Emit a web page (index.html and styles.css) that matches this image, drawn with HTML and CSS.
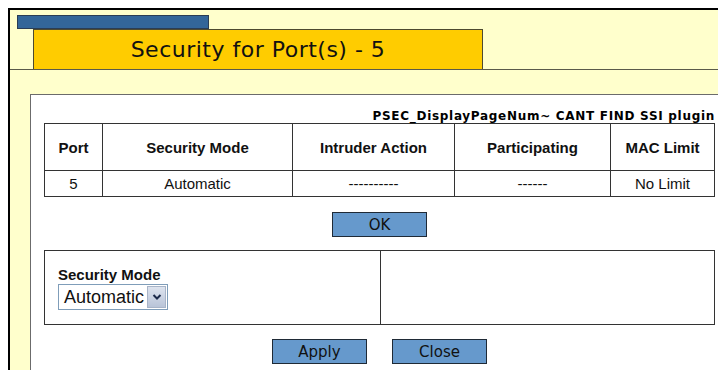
FILE: index.html
```html
<!DOCTYPE html>
<html lang="en">
<head>
    <meta charset="UTF-8">
    <meta name="viewport" content="width=device-width, initial-scale=1.0">
    <title>Port Security</title>
    <link rel="stylesheet" href="styles.css">
</head>
<body>
<div class="frame">
    <!-- tab strip + title -->
    <div class="tab-strip"></div>
    <div class="title-row">
        <h1 class="title">Security for Port(s) - 5</h1>
    </div>

    <div class="panel">
        <div class="page-note">PSEC_DisplayPageNum~ CANT FIND SSI plugin</div>
        <table class="ports">
            <thead>
                <tr>
                    <th class="col-port">Port</th>
                    <th class="col-mode">Security Mode</th>
                    <th class="col-intruder">Intruder Action</th>
                    <th class="col-part">Participating</th>
                    <th>MAC Limit</th>
                </tr>
            </thead>
            <tbody>
                <tr>
                    <td>5</td>
                    <td>Automatic</td>
                    <td>----------</td>
                    <td>------</td>
                    <td>No Limit</td>
                </tr>
            </tbody>
        </table>

        <div class="actions ok-row">
            <button class="btn" type="button">OK</button>
        </div>

        <table class="settings">
            <tr>
                <td class="setting-cell">
                    <label class="setting-label">Security Mode</label>
                    <div class="select">
                        <span class="select-value">Automatic</span>
                        <span class="select-arrow">
                            <svg width="10" height="8" viewBox="0 0 10 8"><path d="M1.5 2 L5 5.5 L8.5 2" fill="none" stroke="#1c2a4a" stroke-width="2"/></svg>
                        </span>
                    </div>
                </td>
                <td class="setting-empty"></td>
            </tr>
        </table>

        <div class="actions bottom-row">
            <button class="btn" type="button">Apply</button>
            <button class="btn" type="button">Close</button>
        </div>
    </div>
</div>
</body>
</html>
```

FILE: styles.css
```css
html, body {
    overflow: hidden;
}

body {
    margin: 8px;
    background: #fff;
    font-family: "Liberation Sans", Arial, sans-serif;
}

.frame {
    width: 760px;
    min-height: 420px;
    border-top: 2px solid #000;
    border-left: 2px solid #000;
    background-color: #ffffcc;
}

.tab-strip {
    margin: 5px 0 0 7px;
    width: 190px;
    height: 12px;
    background-color: #336699;
    border: 1px solid #2a3d55;
}

.title-row {
    border-bottom: 1px solid #5a5a4a;
}

.title {
    margin: 0 0 0 23px;
    width: 448px;
    height: 39px;
    line-height: 39px;
    background-color: #ffcc00;
    border: 1px solid #4d4a30;
    border-bottom: none;
    font-family: "DejaVu Sans", Verdana, sans-serif;
    font-weight: normal;
    font-size: 22px;
    letter-spacing: 0.5px;
    text-align: center;
    color: #111;
}

.panel {
    margin: 24px 0 0 20px;
    width: 697px;
    min-height: 300px;
    padding: 0 13px;
    background: #fff;
    border: 1px solid #6b6b6b;
}

.page-note {
    width: 671px;
    padding-top: 14px;
    height: 14px;
    line-height: 14px;
    text-align: right;
    font-family: "DejaVu Sans", Verdana, sans-serif;
    font-weight: bold;
    font-size: 12px;
    letter-spacing: 0.7px;
    color: #000;
    white-space: nowrap;
}

table {
    border-collapse: collapse;
    width: 671px;
    table-layout: fixed;
}

.ports th, .ports td {
    border: 1px solid #333;
    text-align: center;
    padding: 0;
    color: #111;
}

.ports th {
    height: 46px;
    font-size: 15px;
    font-weight: bold;
}

.ports td {
    height: 25px;
    font-size: 15px;
}

.col-port { width: 57px; }
.col-mode { width: 189px; }
.col-intruder { width: 161px; }
.col-part { width: 155px; }

.actions {
    width: 671px;
    display: flex;
    justify-content: center;
    gap: 25px;
}

.ok-row {
    margin-top: 15px;
}

.bottom-row {
    margin-top: 14px;
}

.btn {
    width: 95px;
    height: 25px;
    padding: 0;
    background-color: #6699cc;
    border: 1px solid #1f2a36;
    font-family: "DejaVu Sans", Verdana, sans-serif;
    font-size: 15px;
    color: #111;
}

.settings {
    margin-top: 13px;
}

.settings td {
    border: 1px solid #333;
    height: 73px;
    padding: 0;
}

.setting-cell {
    width: 322px;
    padding: 0 0 0 13px !important;
    vertical-align: top;
}

.setting-label {
    display: block;
    margin-top: 15px;
    font-size: 15px;
    font-weight: bold;
    color: #111;
    line-height: 17px;
}

.select {
    display: inline-flex;
    align-items: center;
    margin-top: 1px;
    height: 24px;
    padding-right: 1px;
    border: 1px solid #7f9db9;
    background: #fff;
}

.select-value {
    padding: 0 3px 0 5px;
    font-size: 18px;
    color: #111;
}

.select-arrow {
    width: 19px;
    height: 22px;
    display: flex;
    align-items: center;
    justify-content: center;
    background: linear-gradient(#dde3ee, #b9c4d8);
    border: 1px solid #a8b4c8;
    box-sizing: border-box;
}
```
